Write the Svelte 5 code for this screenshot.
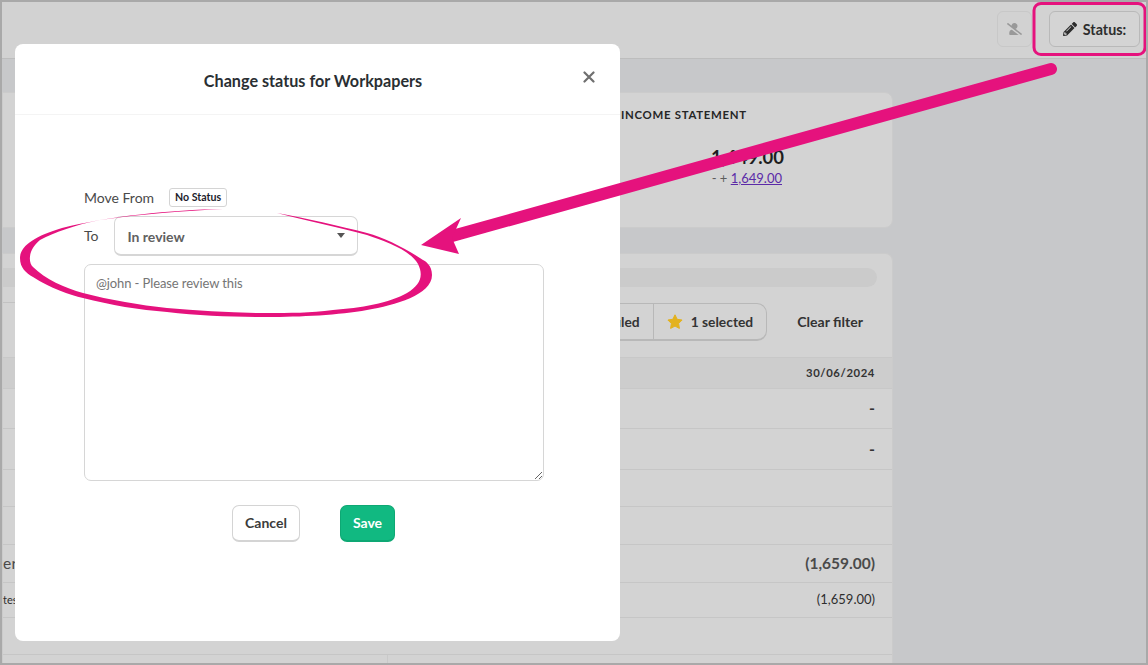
<script>
  const rows = [
    { h: 40, value: "-", cls: "dash" },
    { h: 41, value: "-", cls: "dash" },
    { h: 37, value: "" },
    { h: 38, value: "" },
    { h: 38, value: "(1,659.00)", cls: "big", label: "er" },
    { h: 35, value: "(1,659.00)", cls: "small", label: "tes" },
    { h: 37, value: "" },
  ];
</script>

<div class="page">
  <header class="topbar">
    <button class="icon-btn" aria-label="Mute">
      <svg width="15" height="12" viewBox="0 0 640 512">
        <path d="M633.800 458.100L362.300 248.300C412.100 230.700 448 183.800 448 128 448 57.300 390.700 0 320 0c-67.100 0-121.500 51.800-126.900 117.400L45.500 3.400C38.500-2 28.500-.8 23 6.200L3.400 31.500C-2.100 38.400-.8 48.400 6.200 53.800l588.400 454.700c7 5.500 17 4.200 22.500-2.800l19.600-25.300c5.400-6.800 4.100-16.900-2.900-22.300zM96 422.400V464c0 26.500 21.500 48 48 48h350.200L207.400 290.300C144.200 301.300 96 356 96 422.400z" fill="#999" />
      </svg>
    </button>
    <button class="status-btn">
      <svg width="14" height="14" viewBox="0 0 512 512">
        <path d="M497.900 142.100l-46.100 46.100c-4.700 4.700-12.300 4.700-17 0l-111-111c-4.700-4.700-4.700-12.300 0-17l46.100-46.100c18.700-18.700 49.100-18.700 67.900 0l60.100 60.100c18.800 18.700 18.800 49.100 0 67.900zM284.200 99.800L21.600 362.400.4 483.900c-2.900 16.400 11.400 30.600 27.800 27.800l121.500-21.300 262.600-262.600c4.700-4.700 4.700-12.300 0-17l-111-111c-4.800-4.700-12.400-4.700-17.100 0zM124.100 339.900c-5.500-5.500-5.500-14.300 0-19.800l154-154c5.500-5.500 14.300-5.500 19.800 0s5.500 14.300 0 19.800l-154 154c-5.500 5.500-14.300 5.500-19.800 0zM88 424h48v36.300l-64.500 11.300-31.100-31.100L51.700 376H88v48z" fill="#2c2c2c" />
      </svg>
      Status:
    </button>
  </header>

  <main class="content">
    <section class="card summary">
      <div class="summary-col">
        <h3>INCOME STATEMENT</h3>
        <div class="amount">1,649.00</div>
        <div class="sub">- + <a href="#top">1,649.00</a></div>
      </div>
    </section>

    <section class="card table-card">
      <div class="progress"></div>
      <div class="filters">
        <div class="seg">
          <span class="seg-item">Unfiled</span>
          <span class="seg-item sel">
            <svg width="16" height="15" viewBox="0 0 16 15">
              <path d="M8 .8l2.200 4.500 4.900.7-3.500 3.500.8 4.900L8 12.100l-4.400 2.300.8-4.900L.9 6l4.900-.7z" fill="#e3b21f" stroke="#e3b21f" stroke-linejoin="round" />
            </svg>
            1 selected
          </span>
        </div>
        <span class="clear">Clear filter</span>
      </div>
      <div class="thead">30/06/2024</div>
      {#each rows as row}
        <div class="row" style="height: {row.h}px">
          {#if row.label}<span class="row-label {row.cls}">{row.label}</span>{/if}
          <span class="val {row.cls}">{row.value}</span>
        </div>
      {/each}
      <div class="foot"><div class="foot-cell"></div></div>
    </section>
  </main>

  <div class="modal">
    <div class="modal-head">
      <h2>Change status for Workpapers</h2>
      <button class="close" aria-label="Close">
        <svg width="12" height="12" viewBox="0 0 12 12">
          <path d="M1.500 1.500l9 9m0-9-9 9" stroke="#6f6f6f" stroke-width="2.200" stroke-linecap="round" />
        </svg>
      </button>
    </div>
    <div class="modal-body">
      <div class="from">
        <span>Move From</span>
        <span class="badge">No Status</span>
      </div>
      <div class="to">
        <span class="to-label">To</span>
        <div class="select">
          In review
          <i class="caret"></i>
        </div>
      </div>
      <textarea placeholder="@john - Please review this"></textarea>
      <div class="actions">
        <button class="btn cancel">Cancel</button>
        <button class="btn save">Save</button>
      </div>
    </div>
  </div>

  <!-- annotation layer -->
  <svg class="notes" width="1148" height="665" viewBox="0 0 1148 665">
    <rect x="1034" y="3.500" width="111" height="51" rx="7" fill="none" stroke="#e5127d" stroke-width="3" />
    <path d="M1051 69 445 238" stroke="#e5127d" stroke-width="12" stroke-linecap="round" fill="none" />
    <path d="M421 245 461 218 452 238 459 254z" fill="#e5127d" />
    <path d="M223 209C170 210 110 216 62 228 35 236 20 246 20 258 20 268 26 273 33 277 50 288 70 295 83 298 110 305 140 310 167 312 200 316 235 317 267 317 300 317 340 315 367 310 395 305 432 295 432 275 432 265 425 261 423 260 405 248 385 238 367 233 340 226 305 218 277 213 305 220 340 228 367 235 385 241 410 250 418 264 424 276 420 285 407 293 390 303 360 308 333 310 310 313 290 313 267 313 235 313 200 311 167 308 140 305 110 300 83 293 65 288 45 279 33 267 28 262 28 250 40 240 55 232 75 225 100 220 140 214 185 211 223 209z" fill="#e5127d" />
  </svg>
</div>

<style>
  :global(body) {
    margin: 0;
    font-family: Lato, "Open Sans", sans-serif;
  }
  .page {
    position: relative;
    width: 1148px;
    height: 665px;
    box-sizing: border-box;
    border: 2px solid #a9a9a9;
    background: #c7c8ca;
    overflow: hidden;
    display: flex;
    flex-direction: column;
  }
  .topbar {
    height: 57px;
    flex: none;
    box-sizing: border-box;
    background: #d2d2d2;
    border-bottom: 1px solid #bdbdbd;
    display: flex;
    justify-content: flex-end;
    align-items: flex-start;
    gap: 17px;
    padding: 9px 6px 0 0;
  }
  button {
    font-family: inherit;
    cursor: pointer;
  }
  .icon-btn {
    width: 35px;
    height: 36px;
    padding: 0;
    border: 1px solid #c8c8c8;
    border-radius: 6px;
    background: #d2d2d2;
    display: grid;
    place-items: center;
  }
  .status-btn {
    width: 91px;
    height: 36px;
    padding: 0;
    border: 1px solid #b9b9b9;
    border-radius: 6px;
    background: #d4d4d4;
    color: #2d2d2d;
    font-size: 14.300px;
    font-weight: 700;
    display: flex;
    align-items: center;
    justify-content: center;
    gap: 6px;
  }
  .content {
    flex: 1;
    min-height: 0;
    width: 891px;
    padding-top: 33px;
    display: flex;
    flex-direction: column;
    gap: 25px;
  }
  .card {
    background: #d3d3d3;
    border: 1px solid #cbcbcb;
    border-radius: 0 8px 8px 0;
    box-sizing: border-box;
  }
  .summary {
    height: 136px;
    flex: none;
    padding: 15px 0 0 618px;
  }
  .summary-col h3 {
    margin: 0;
    color: #262626;
    font-size: 11.400px;
    font-weight: 700;
    letter-spacing: 0.7px;
    line-height: 14px;
  }
  .amount {
    width: 163px;
    margin-top: 23px;
    text-align: right;
    color: #1e1e1e;
    font-size: 18.500px;
    font-weight: 700;
    line-height: 24px;
  }
  .sub {
    width: 161px;
    margin-top: 1px;
    text-align: right;
    color: #5c5c5c;
    font-size: 13px;
    line-height: 16px;
  }
  .sub a {
    color: #5b2aa8;
  }
  .table-card {
    flex: 1;
    border-bottom: none;
    border-radius: 0 8px 0 0;
    padding-top: 14px;
  }
  .progress {
    height: 19px;
    margin-right: 15px;
    background: #cbcbcb;
    border-radius: 0 10px 10px 0;
  }
  .filters {
    position: relative;
    height: 70px;
    display: flex;
    justify-content: flex-end;
    align-items: center;
    padding-right: 29px;
    gap: 30px;
  }
  .filters::before {
    content: "";
    position: absolute;
    left: 0;
    top: 15px;
    width: 200px;
    height: 1px;
    background: #c2c2c2;
  }
  .seg {
    display: flex;
    height: 38px;
    border: 1px solid #b8b8b8;
    border-bottom-width: 2px;
    border-radius: 0 10px 10px 0;
    box-sizing: border-box;
    color: #333;
    font-size: 13.800px;
    font-weight: 700;
  }
  .seg-item {
    display: flex;
    align-items: center;
    padding: 0 13px;
    gap: 8px;
  }
  .seg-item.sel {
    border-left: 1px solid #b8b8b8;
  }
  .clear {
    color: #333;
    font-size: 14.100px;
    font-weight: 700;
    margin-top: -1px;
  }
  .thead {
    height: 32px;
    box-sizing: border-box;
    background: #cdcdcd;
    border-top: 1px solid #c8c8c8;
    border-bottom: 1px solid #c8c8c8;
    text-align: right;
    padding-right: 17px;
    line-height: 30px;
    color: #333;
    font-size: 11.300px;
    font-weight: 700;
    letter-spacing: 0.6px;
  }
  .row {
    box-sizing: border-box;
    border-bottom: 1px solid #c6c6c6;
    padding: 0 17px 2px 0;
    display: flex;
    justify-content: space-between;
    align-items: center;
    color: #333;
  }
  .val {
    margin-left: auto;
  }
  .val.dash {
    font-size: 16px;
    font-weight: 700;
  }
  .big {
    font-size: 15.500px;
    font-weight: 700;
    color: #4a4a4a;
  }
  .small {
    font-size: 13px;
    color: #2e2e2e;
  }
  .row-label.big {
    font-weight: 400;
    letter-spacing: 0.4px;
  }
  .row-label.small {
    font-size: 11px;
  }
  .foot {
    height: 12px;
  }
  .foot-cell {
    height: 100%;
    margin-left: 384px;
    border-left: 1px solid #c9c9c9;
  }
  .modal {
    position: absolute;
    left: 13px;
    top: 42px;
    width: 605px;
    height: 597px;
    background: #fff;
    border-radius: 8px;
    display: flex;
    flex-direction: column;
  }
  .modal-head {
    height: 71px;
    flex: none;
    box-sizing: border-box;
    border-bottom: 1px solid #f4f4f4;
    display: flex;
    align-items: center;
    justify-content: center;
    padding-right: 9px;
    position: relative;
  }
  .modal-head h2 {
    margin: 3px 0 0;
    color: #2a2f33;
    font-size: 16.200px;
    font-weight: 700;
  }
  .close {
    position: absolute;
    right: 24px;
    top: 26px;
    width: 14px;
    height: 14px;
    padding: 0;
    border: 0;
    background: none;
    display: grid;
    place-items: center;
  }
  .modal-body {
    padding: 72px 76px 0 69px;
    display: flex;
    flex-direction: column;
    color: #4a4a4a;
    font-size: 14px;
  }
  .from {
    display: flex;
    align-items: center;
    gap: 15px;
    height: 20px;
  }
  .badge {
    height: 19px;
    box-sizing: border-box;
    padding: 0 5px;
    border: 1px solid #d4d4d4;
    border-radius: 3px;
    color: #1d1d2b;
    font-size: 10.600px;
    font-weight: 700;
    line-height: 17px;
  }
  .to {
    display: flex;
    align-items: flex-start;
    gap: 15px;
    margin-top: 9px;
  }
  .to-label {
    line-height: 40px;
  }
  .select {
    position: relative;
    width: 244px;
    height: 40px;
    box-sizing: border-box;
    border: 1px solid #d6d6d6;
    border-bottom-width: 2px;
    border-radius: 7px;
    padding-left: 13px;
    color: #616161;
    font-weight: 700;
    line-height: 39px;
  }
  .caret {
    position: absolute;
    right: 12px;
    top: 16px;
    border: 4.500px solid transparent;
    border-top: 5px solid #555;
    border-bottom: 0;
  }
  textarea {
    width: 460px;
    height: 217px;
    margin-top: 8px;
    box-sizing: border-box;
    border: 1px solid #d6d6d6;
    border-radius: 7px;
    padding: 10px 11px;
    font-family: inherit;
    font-size: 13px;
    letter-spacing: -0.1px;
    outline: none;
  }
  textarea::placeholder {
    color: #757575;
    opacity: 1;
  }
  .actions {
    display: flex;
    gap: 40px;
    margin-top: 24px;
    padding-left: 148px;
  }
  .btn {
    height: 37px;
    box-sizing: border-box;
    border-radius: 7px;
    font-size: 14px;
    font-weight: 700;
    padding: 0 0 2px;
  }
  .cancel {
    width: 68px;
    background: #fff;
    color: #3b3b3b;
    border: 1px solid #d4d4d4;
    border-bottom-width: 2px;
  }
  .save {
    width: 55px;
    background: #11b981;
    color: #fff;
    border: 1px solid #0ea874;
    border-bottom-width: 2px;
  }
  .notes {
    position: absolute;
    left: -2px;
    top: -2px;
    pointer-events: none;
  }
</style>
